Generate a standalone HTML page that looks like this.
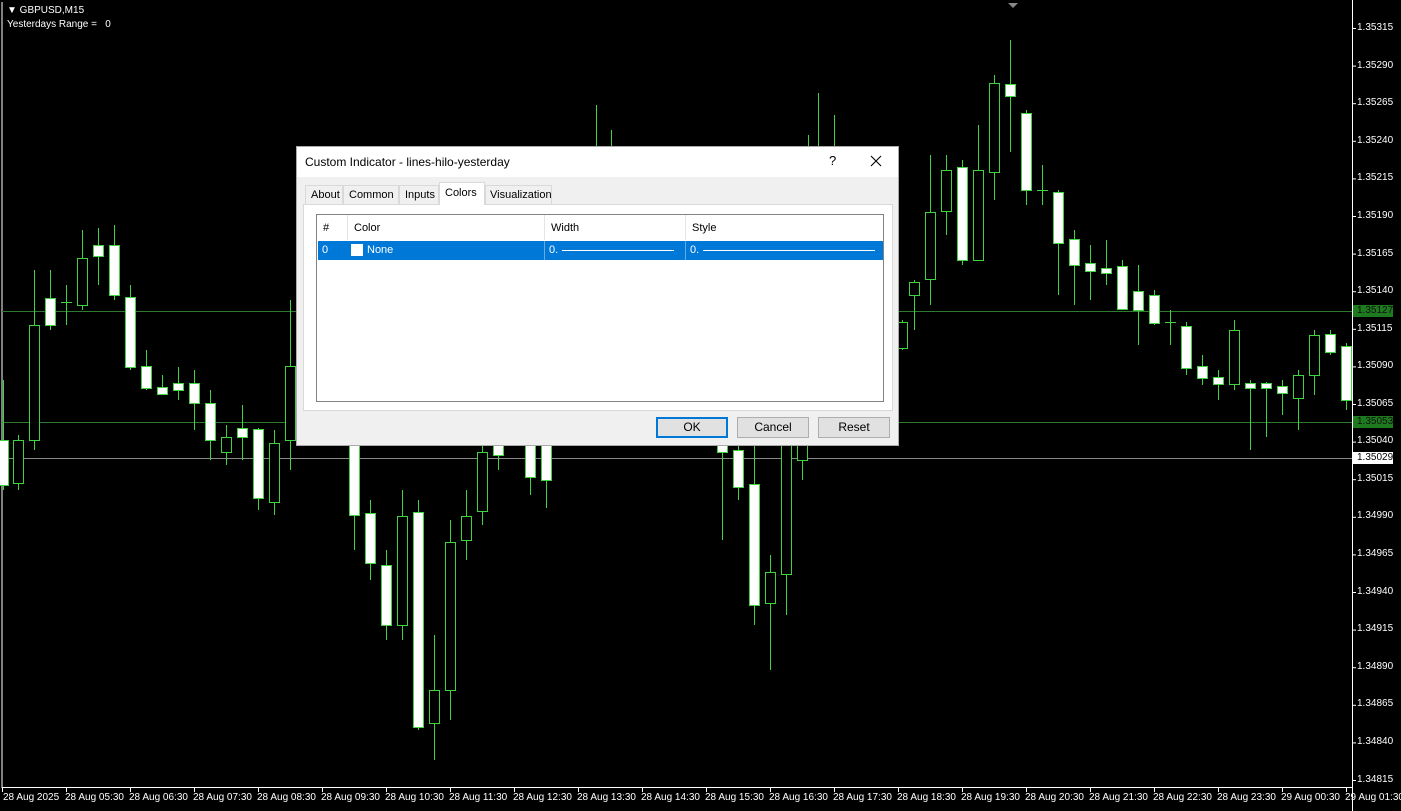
<!DOCTYPE html>
<html><head><meta charset="utf-8"><style>
body{margin:0;width:1401px;height:811px;background:#000;overflow:hidden;position:relative;font-family:"Liberation Sans",sans-serif}
svg{position:absolute;left:0;top:0}
.dlg{position:absolute;left:296px;top:146px;width:603px;height:300px;background:#f0f0f0;border:1px solid #aaa;box-sizing:border-box;font-size:12px;color:#000}
.ttl{position:absolute;left:0;top:0;width:100%;height:30px;background:#fff}
.ttl span{position:absolute;top:8px}
.tab{position:absolute;top:38px;height:19px;border:1px solid #d9d9d9;border-bottom:none;background:#f0f0f0;box-sizing:border-box;padding:3px 0 0 5px;font-size:11px;white-space:nowrap;overflow:hidden}
.panel{position:absolute;left:6px;top:57px;width:590px;height:207px;background:#fff;border:1px solid #d9d9d9;box-sizing:border-box}
.list{position:absolute;left:12px;top:9px;width:568px;height:188px;border:1px solid #828282;box-sizing:border-box;background:#fff}
.hd{position:absolute;top:0;height:25px;border-right:1px solid #e5e5e5;box-sizing:border-box;padding:7px 0 0 6px;font-size:11px}
.row{position:absolute;left:1px;top:26px;width:565px;height:19px;background:#0078d7;color:#fff;font-size:11px}
.row span{position:absolute;top:3px}
.btn{position:absolute;top:270px;width:72px;height:21px;border:1px solid #adadad;background:#e1e1e1;box-sizing:border-box;text-align:center;line-height:19px}
.ax{position:absolute;color:#fff;font-size:10px;font-family:"Liberation Sans",sans-serif;white-space:nowrap}
</style></head><body>
<svg width="1401" height="811" id="c">
<line x1="2" y1="2" x2="2" y2="788" stroke="#fff"/>
<line x1="2" y1="787.5" x2="1352" y2="787.5" stroke="#fff"/>
<line x1="1352.5" y1="0" x2="1352.5" y2="811" stroke="#fff"/>
<line x1="2" y1="311.5" x2="1352" y2="311.5" stroke="#2f7a2f"/>
<line x1="2" y1="422.5" x2="1352" y2="422.5" stroke="#2f7a2f"/>
<line x1="2" y1="458.5" x2="1352" y2="458.5" stroke="#888"/>
<polygon points="1008,3 1018,3 1013,8" fill="#888"/>
<g id="cd"></g>
<g id="tk" stroke="#fff"></g>
<rect x="1353" y="305" width="40" height="12" fill="#1e7a1e"/>
<rect x="1353" y="416" width="40" height="12" fill="#1e7a1e"/>
<rect x="1353" y="452" width="40" height="12" fill="#fff"/>
</svg>
<div class="ax" style="left:7px;top:5px">&#9660; GBPUSD,M15</div>
<div class="ax" style="left:7px;top:19px">Yesterdays Range = &nbsp;&nbsp;0</div>
<div class="ax" style="left:1357px;top:22px">1.35315</div>
<div class="ax" style="left:1357px;top:60px">1.35290</div>
<div class="ax" style="left:1357px;top:97px">1.35265</div>
<div class="ax" style="left:1357px;top:135px">1.35240</div>
<div class="ax" style="left:1357px;top:172px">1.35215</div>
<div class="ax" style="left:1357px;top:210px">1.35190</div>
<div class="ax" style="left:1357px;top:248px">1.35165</div>
<div class="ax" style="left:1357px;top:285px">1.35140</div>
<div class="ax" style="left:1357px;top:305px;color:#111">1.35127</div>
<div class="ax" style="left:1357px;top:323px">1.35115</div>
<div class="ax" style="left:1357px;top:360px">1.35090</div>
<div class="ax" style="left:1357px;top:398px">1.35065</div>
<div class="ax" style="left:1357px;top:416px;color:#111">1.35053</div>
<div class="ax" style="left:1357px;top:435px">1.35040</div>
<div class="ax" style="left:1357px;top:452px;color:#000">1.35029</div>
<div class="ax" style="left:1357px;top:473px">1.35015</div>
<div class="ax" style="left:1357px;top:510px">1.34990</div>
<div class="ax" style="left:1357px;top:548px">1.34965</div>
<div class="ax" style="left:1357px;top:586px">1.34940</div>
<div class="ax" style="left:1357px;top:623px">1.34915</div>
<div class="ax" style="left:1357px;top:661px">1.34890</div>
<div class="ax" style="left:1357px;top:698px">1.34865</div>
<div class="ax" style="left:1357px;top:736px">1.34840</div>
<div class="ax" style="left:1357px;top:774px">1.34815</div>
<div class="ax" style="left:3px;top:792px">28 Aug 2025</div>
<div class="ax" style="left:65px;top:792px">28 Aug 05:30</div>
<div class="ax" style="left:129px;top:792px">28 Aug 06:30</div>
<div class="ax" style="left:193px;top:792px">28 Aug 07:30</div>
<div class="ax" style="left:257px;top:792px">28 Aug 08:30</div>
<div class="ax" style="left:321px;top:792px">28 Aug 09:30</div>
<div class="ax" style="left:385px;top:792px">28 Aug 10:30</div>
<div class="ax" style="left:449px;top:792px">28 Aug 11:30</div>
<div class="ax" style="left:513px;top:792px">28 Aug 12:30</div>
<div class="ax" style="left:577px;top:792px">28 Aug 13:30</div>
<div class="ax" style="left:641px;top:792px">28 Aug 14:30</div>
<div class="ax" style="left:705px;top:792px">28 Aug 15:30</div>
<div class="ax" style="left:769px;top:792px">28 Aug 16:30</div>
<div class="ax" style="left:833px;top:792px">28 Aug 17:30</div>
<div class="ax" style="left:897px;top:792px">28 Aug 18:30</div>
<div class="ax" style="left:961px;top:792px">28 Aug 19:30</div>
<div class="ax" style="left:1025px;top:792px">28 Aug 20:30</div>
<div class="ax" style="left:1089px;top:792px">28 Aug 21:30</div>
<div class="ax" style="left:1153px;top:792px">28 Aug 22:30</div>
<div class="ax" style="left:1217px;top:792px">28 Aug 23:30</div>
<div class="ax" style="left:1281px;top:792px">29 Aug 00:30</div>
<div class="ax" style="left:1345px;top:792px">29 Aug 01:30</div>

<div class="dlg">
 <div class="ttl"><span style="left:8px;font-size:12px">Custom Indicator - lines-hilo-yesterday</span><span style="left:532px;top:6px;font-size:13px">?</span>
 <svg style="left:573px;top:8px" width="12" height="12"><path d="M1 1L11 11M11 1L1 11" stroke="#000" stroke-width="1.1"/></svg></div>
 <div class="tab" style="left:8px;width:38px">About</div>
 <div class="tab" style="left:46px;width:56px">Common</div>
 <div class="tab" style="left:102px;width:40px">Inputs</div>
 <div class="tab" style="left:142px;top:35px;height:23px;width:46px;background:#fff;z-index:2;padding-top:4px">Colors</div>
 <div class="tab" style="left:188px;width:67px;padding-left:4px">Visualization</div>
 <div class="panel"><div class="list">
  <div class="hd" style="left:0;width:31px">#</div>
  <div class="hd" style="left:31px;width:197px">Color</div>
  <div class="hd" style="left:228px;width:141px">Width</div>
  <div class="hd" style="left:369px;width:197px;border:none">Style</div>
  <div class="row">
   <span style="left:4px">0</span>
   <div style="position:absolute;left:33px;top:3px;width:12px;height:12px;background:#fff"></div>
   <span style="left:49px">None</span>
   <div style="position:absolute;left:226px;top:0;width:1px;height:19px;background:#6aa8e0"></div>
   <span style="left:231px">0.</span><div style="position:absolute;left:244px;top:9px;width:112px;height:1px;background:#fff"></div>
   <div style="position:absolute;left:367px;top:0;width:1px;height:19px;background:#6aa8e0"></div>
   <span style="left:372px">0.</span><div style="position:absolute;left:385px;top:9px;width:172px;height:1px;background:#fff"></div>
  </div>
 </div></div>
 <div class="btn" style="left:359px;border:2px solid #0078d7;line-height:17px">OK</div>
 <div class="btn" style="left:440px">Cancel</div>
 <div class="btn" style="left:521px">Reset</div>
</div>
<script>
var C=[[3,380,490,440,485,1],[18,435,490,440,483,0],[34,270,450,325,440,0],[50,270,330,298,325,1],[66,285,325,302,303,2],[82,230,310,258,305,0],[98,228,285,245,256,1],[114,225,300,245,295,1],[130,285,370,297,367,1],[146,350,390,366,388,1],[162,375,395,387,394,1],[178,367,400,383,390,1],[194,370,430,383,403,1],[210,390,460,403,440,1],[226,425,465,437,452,0],[242,405,460,428,437,1],[258,428,510,429,498,1],[274,430,515,443,502,0],[290,300,470,366,440,0],
[354,440,550,440,515,1],[370,500,580,513,563,1],[386,550,640,565,625,1],[402,490,640,516,625,0],[418,500,730,512,727,1],[434,635,760,690,723,0],[450,520,720,542,690,0],[466,490,560,516,540,0],[482,440,525,452,511,0],[498,440,470,440,455,1],[530,440,495,440,477,1],[546,440,508,440,480,1],
[596,105,150,150,150,2],[611,130,150,150,150,2],[722,440,540,440,452,1],[738,440,500,450,487,1],[754,440,625,484,605,1],[770,555,670,572,603,0],[786,440,615,440,574,0],[802,440,480,440,460,0],[808,135,150,150,150,2],[818,93,150,150,150,2],[834,115,150,150,150,2],
[902,320,350,322,348,0],[914,280,330,282,295,0],[930,155,305,212,279,0],[946,155,235,170,211,0],[962,160,265,167,260,1],[978,125,260,170,260,0],[994,75,200,83,172,0],[1010,40,152,84,96,1],[1026,110,205,113,190,1],[1042,165,205,190,190,2],[1058,190,295,192,243,1],[1074,230,305,239,265,1],[1090,245,300,263,271,1],[1106,240,285,268,273,1],[1122,260,310,266,309,1],[1138,265,345,291,310,1],[1154,290,325,295,323,1],[1170,310,345,322,323,2],[1186,322,375,326,368,1],[1202,355,385,366,378,1],[1218,370,400,377,384,1],[1234,320,390,330,384,0],[1250,380,450,383,388,1],[1266,382,437,383,388,1],[1282,380,415,386,393,1],[1298,370,430,375,398,0],[1314,330,395,335,375,0],[1330,330,355,334,352,1],[1346,343,410,346,400,1]];
var s='';C.forEach(function(c){var x=c[0];s+='<line x1="'+(x+.5)+'" y1="'+c[1]+'" x2="'+(x+.5)+'" y2="'+c[2]+'" stroke="#3fd43f"/>';
if(c[5]==2)s+='<line x1="'+(x-5)+'" y1="'+(c[3]+.5)+'" x2="'+(x+6)+'" y2="'+(c[3]+.5)+'" stroke="#3fd43f"/>';
else s+='<rect x="'+(x-4.5)+'" y="'+(c[3]+.5)+'" width="10" height="'+Math.max(c[4]-c[3],2)+'" fill="'+(c[5]?'#fff':'#000')+'" stroke="#3fd43f"/>';});
document.getElementById('cd').innerHTML=s;
var t='';for(var i=0;i<22;i++){var x=2.5+64*i;t+='<line x1="'+x+'" y1="788" x2="'+x+'" y2="792"/>';}
for(var j=0;j<21;j++){var y=28.5+37.6*j;t+='<line x1="1352" y1="'+y+'" x2="1356" y2="'+y+'"/>';}
document.getElementById('tk').innerHTML=t;
</script>
</body></html>
